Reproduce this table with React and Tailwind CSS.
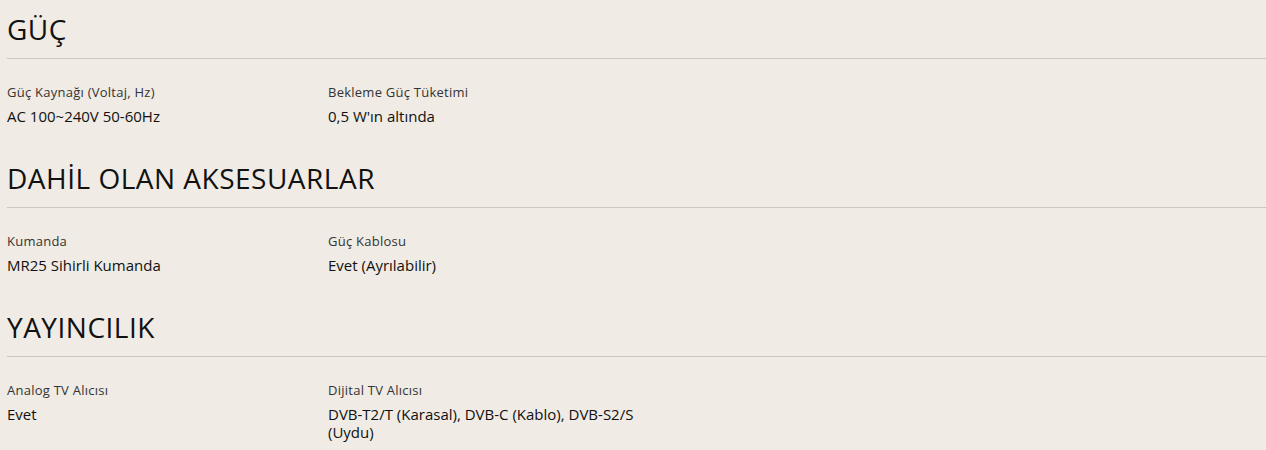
import React from "react";

const sections = [
  {
    title: "GÜÇ",
    items: [
      ["Güç Kaynağı (Voltaj, Hz)", "AC 100~240V 50-60Hz"],
      ["Bekleme Güç Tüketimi", "0,5 W'ın altında"],
    ],
  },
  {
    title: "DAHİL OLAN AKSESUARLAR",
    items: [
      ["Kumanda", "MR25 Sihirli Kumanda"],
      ["Güç Kablosu", "Evet (Ayrılabilir)"],
    ],
  },
  {
    title: "YAYINCILIK",
    items: [
      ["Analog TV Alıcısı", "Evet"],
      ["Dijital TV Alıcısı", "DVB-T2/T (Karasal), DVB-C (Kablo), DVB-S2/S (Uydu)"],
    ],
  },
];

export default function App() {
  return (
    <div
      className="w-[1266px] h-[450px] overflow-hidden bg-[#f0ebe4] pl-[7px] text-[#111]"
      style={{ fontFamily: '"Open Sans", "Noto Sans", sans-serif' }}
    >
      {sections.map((s) => (
        <section key={s.title} className="h-[149px]">
          <h2 className="pt-[10px] pb-[10px] text-[28px] tracking-[0.5px] leading-[38px] font-normal border-b border-[#ccc7c1]">
            {s.title}
          </h2>
          <div className="grid grid-cols-[321px_321px] pt-[24px]">
            {s.items.map(([label, value]) => (
              <div key={label} className="pr-[10px]">
                <div className="text-[13px] tracking-[0.25px] leading-[18px] text-[#333]">{label}</div>
                <div className="mt-[6px] text-[15px] leading-[18px] text-[#111]">{value}</div>
              </div>
            ))}
          </div>
        </section>
      ))}
    </div>
  );
}
